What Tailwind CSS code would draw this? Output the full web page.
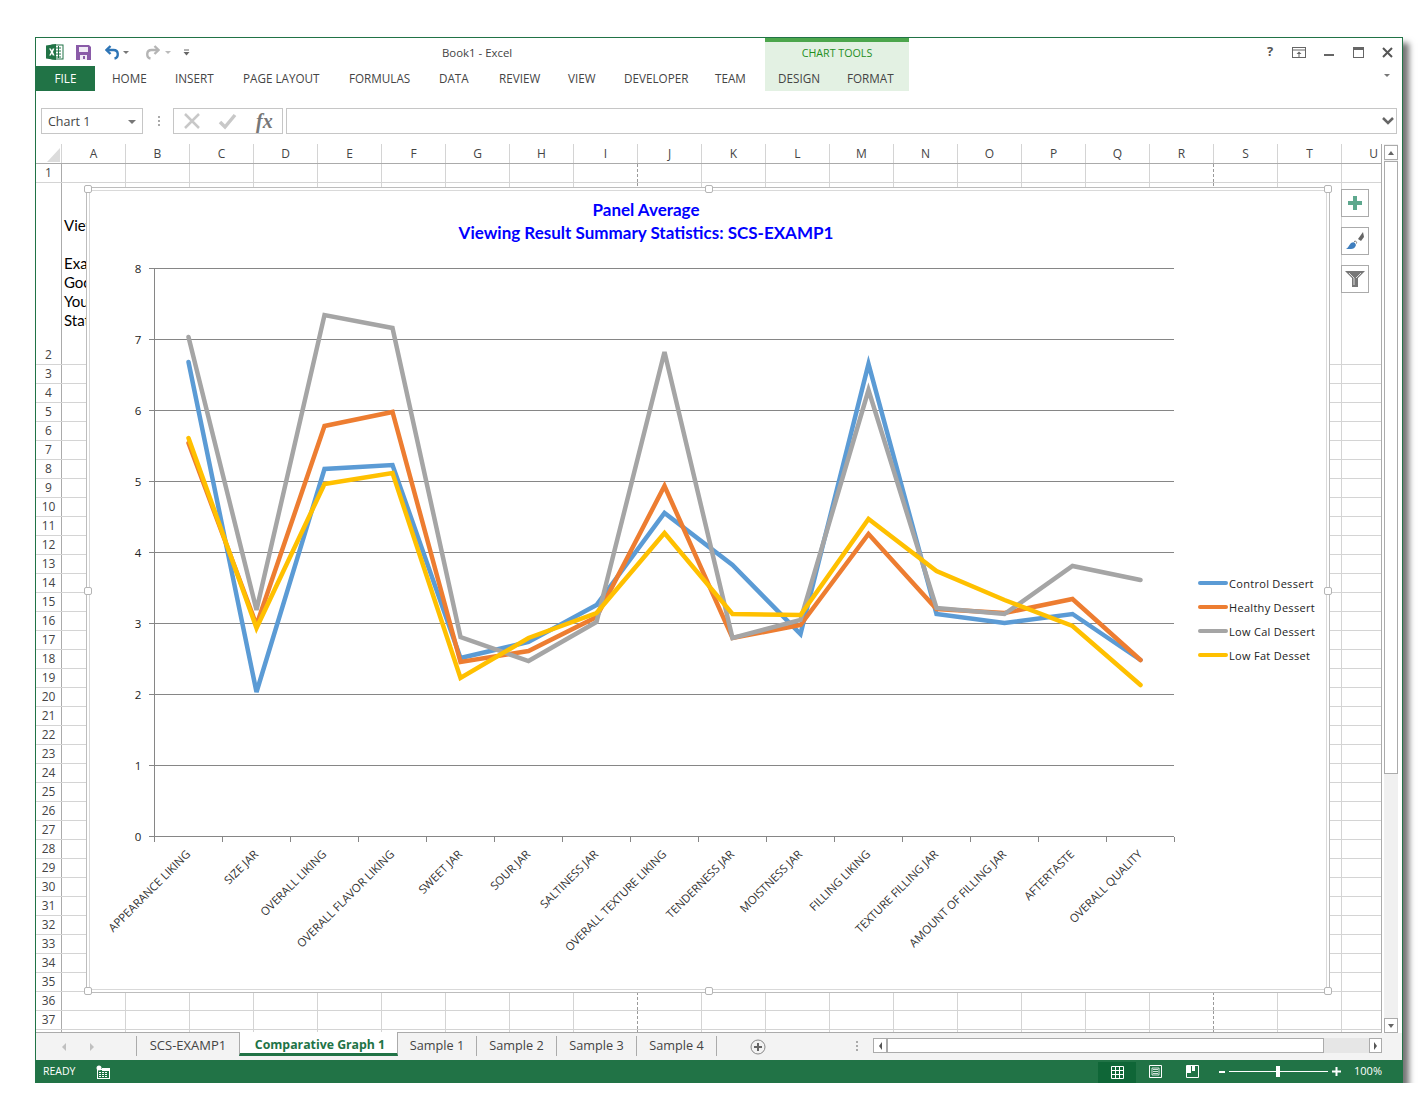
<!DOCTYPE html>
<html lang="en">
<head>
    <meta charset="UTF-8">
    <title>Book1 - Excel</title>
    <script src="https://cdn.jsdelivr.net/npm/@tailwindcss/browser@4"></script>
</head>
<body class="bg-white font-['Open_Sans',sans-serif] text-[#444] text-[12px] overflow-hidden">

<!-- Excel window -->
<div class="ml-[35px] mt-[37px] w-[1368px] h-[1046px] border border-[#217346] border-b-0 bg-white flex flex-col shadow-[6px_6px_6px_rgba(0,0,0,0.55)]">

    <!-- Title bar -->
    <div class="h-[28px] flex items-center relative shrink-0">
        <div class="flex items-center pl-[10px] w-[400px]">
            <svg width="18" height="18" viewBox="0 0 18 18" class="mr-[12px]">
                <rect x="6" y="2" width="11" height="14" fill="#fff" stroke="#217346"/>
                <path d="M10 5h5M10 8h5M10 11h5M10 14h5M12.500 3v12" stroke="#217346"/>
                <path d="M0 2.500 10 1v16L0 15.500z" fill="#217346"/>
                <path d="M3 5.500h1.800l1 2 1-2h1.600L7 9l1.600 3.500H6.800l-1-2.100-1 2.100H3.200L5 9z" fill="#fff"/>
            </svg>
            <svg width="15" height="15" viewBox="0 0 15 15" class="mr-[14px]">
                <path d="M0 0h13l2 2v13H0z" fill="#8a5ba8"/>
                <rect x="3" y="2" width="9" height="5" fill="#f1ebf6"/>
                <rect x="4" y="10" width="7" height="5" fill="#f1ebf6"/>
                <rect x="7" y="11" width="2" height="3" fill="#8a5ba8"/>
            </svg>
            <svg width="15" height="15" viewBox="0 0 15 15">
                <path d="M5.500 1 1.500 5l4 4" fill="none" stroke="#2e75b6" stroke-width="2.400"/>
                <path d="M2 5h6.500c5.500 0 5.500 7.500 1 8.500" fill="none" stroke="#2e75b6" stroke-width="2.400"/>
            </svg>
            <span class="ml-[3px] w-0 h-0 border-x-[3px] border-x-transparent border-t-[3px] border-t-[#777]"></span>
            <svg width="15" height="15" viewBox="0 0 15 15" class="ml-[16px]">
                <path d="M9.500 1l4 4-4 4" fill="none" stroke="#b5b5b5" stroke-width="2.400"/>
                <path d="M13 5H6.500c-5.500 0-5.500 7.500-1 8.500" fill="none" stroke="#b5b5b5" stroke-width="2.400"/>
            </svg>
            <span class="ml-[5px] w-0 h-0 border-x-[3px] border-x-transparent border-t-[3px] border-t-[#bbb]"></span>
            <svg width="7" height="7" viewBox="0 0 7 7" class="ml-[12px]">
                <path d="M1 1h5" stroke="#666"/><path d="M0.500 3h6L3.500 6.500z" fill="#666"/>
            </svg>
        </div>
        <div class="w-[329px] pt-[2px] pl-[6px] text-[#444] text-[11.400px]">Book1 - Excel</div>
        <!-- Chart tools contextual header -->
        <div class="w-[144px] h-[28px] bg-[#e3f1e3] border-t-[4px] border-[#4ca64c] flex items-center justify-center pb-[2px] text-[#1f8f1f] text-[10.700px] shrink-0">CHART TOOLS</div>
        <div class="flex-1 flex items-center justify-end pr-[9px] gap-[18px] text-[#555]">
            <span class="font-bold text-[13px] w-[10px] text-center translate-x-[2px]">?</span>
            <svg width="14" height="11" viewBox="0 0 14 11" class="ml-[1px]"><rect x="0.500" y="0.500" width="13" height="10" fill="none" stroke="#666"/><path d="M0 3h14" stroke="#666"/><path d="M7 4.500 4.500 7h2v3h1V7h2z" fill="#666"/></svg>
            <svg width="11" height="11" viewBox="0 0 11 11"><rect y="7" width="10" height="2" fill="#666"/></svg>
            <svg width="11" height="11" viewBox="0 0 11 11"><rect x="0.500" y="0.500" width="10" height="10" fill="none" stroke="#666"/><rect width="11" height="3" fill="#666"/></svg>
            <svg width="11" height="11" viewBox="0 0 11 11"><path d="M1 1l9 9M10 1l-9 9" stroke="#555" stroke-width="2"/></svg>
        </div>
    </div>

    <!-- Ribbon tabs -->
    <div class="h-[25px] flex items-center shrink-0 text-[#444] text-[11.700px] relative">
        <div class="w-[59px] h-full bg-[#217346] text-white flex items-center justify-center">FILE</div>
        <div class="w-[17px]"></div>
        <div class="w-[63px]">HOME</div>
        <div class="w-[68px]">INSERT</div>
        <div class="w-[106px]">PAGE LAYOUT</div>
        <div class="w-[90px]">FORMULAS</div>
        <div class="w-[60px]">DATA</div>
        <div class="w-[69px]">REVIEW</div>
        <div class="w-[56px]">VIEW</div>
        <div class="w-[91px]">DEVELOPER</div>
        <div class="w-[50px]">TEAM</div>
        <div class="w-[144px] h-full bg-[#e3f1e3] flex items-center">
            <span class="ml-[13px] w-[69px]">DESIGN</span>
            <span>FORMAT</span>
        </div>
        <span class="absolute right-[12px] top-[8px] w-0 h-0 border-x-[3px] border-x-transparent border-t-[3px] border-t-[#777]"></span>
    </div>

    <!-- Formula bar -->
    <div class="h-[26px] mt-[17px] flex items-stretch shrink-0 pl-[5px] pr-[5px]">
        <div class="w-[102px] border border-[#c6c6c6] flex items-center justify-between pl-[6px] pr-[6px] pt-[2px] text-[#444] text-[12.500px]">
            <span>Chart 1</span>
            <span class="w-0 h-0 border-x-[4px] border-x-transparent border-t-[4px] border-t-[#777]"></span>
        </div>
        <div class="w-[30px] flex items-center justify-center">
            <svg width="3" height="11" viewBox="0 0 3 11"><path d="M1 0h2v2H1zM1 4h2v2H1zM1 8h2v2H1z" fill="#aaa"/></svg>
        </div>
        <div class="w-[110px] border border-[#c6c6c6] flex items-center pl-[9px]">
            <svg width="18" height="18" viewBox="0 0 18 18"><path d="M2 2l14 14M16 2 2 16" stroke="#c8c8c8" stroke-width="2.500"/></svg>
            <svg width="20" height="18" viewBox="0 0 20 18" class="ml-[17px]"><path d="M2 10l5 5 10-12" fill="none" stroke="#c8c8c8" stroke-width="3.500"/></svg>
            <span class="ml-[18px] font-['Liberation_Serif',serif] italic font-bold text-[20px] text-[#777] leading-none">fx</span>
        </div>
        <div class="flex-1 ml-[3px] border border-[#c6c6c6] flex items-center justify-end pr-[2px]">
            <svg width="12" height="8" viewBox="0 0 12 8"><path d="M1 1l5 5 5-5" fill="none" stroke="#666" stroke-width="2.500"/></svg>
        </div>
    </div>

    <!-- Sheet area + vertical scrollbar -->
    <div class="mt-[10px] flex-1 min-h-0 flex">
        <div class="w-[1346px] relative overflow-hidden border-b border-r border-[#ababab]">
            <!-- Column headers -->
            <div class="h-[20px] flex border-b border-[#ababab]">
                <div class="w-[26px] shrink-0 relative border-r border-[#d4d4d4]">
                    <svg width="13" height="14" viewBox="0 0 13 14" class="absolute left-[11px] top-[4px]"><path d="M13 0v14H0z" fill="#dcdcdc"/></svg>
                </div>
                <div id="cols" class="flex"></div>
            </div>
            <!-- Rows -->
            <div id="rows"></div>

            <!-- Chart, lies over the cells -->
            <div class="absolute left-[50px] top-[43px] w-[1244px] h-[806px] bg-white border border-[#bdbdbd] p-[2px]">
                <div class="w-full h-full border border-[#d9d9d9]">
                <svg width="1236" height="798" viewBox="90 191 1236 798" class="block font-['Open_Sans',sans-serif]">
                    <g stroke="#868686" stroke-width="1">
                        <path d="M149 268.500H1174M149 339.500H1174M149 410.500H1174M149 481.500H1174M149 552.500H1174M149 623.500H1174M149 694.500H1174M149 765.500H1174M149 836.500H1174"/>
                        <path d="M154.500 268V842M222.500 837v5M290.500 837v5M358.500 837v5M426.500 837v5M494.500 837v5M562.500 837v5M630.500 837v5M698.500 837v5M766.500 837v5M834.500 837v5M902.500 837v5M970.500 837v5M1038.500 837v5M1106.500 837v5M1174.500 837v5"/>
                    </g>
                    <g fill="none" stroke-width="4.500" stroke-linecap="round" stroke-linejoin="miter">
                        <polyline stroke="#5b9bd5" points="188.500,362 256.500,692 324.500,469 392.500,465 460.500,658 528.500,642 596.500,605 664.500,513 732.500,565 800.500,634 868.500,364 936.500,614 1004.500,623 1072.500,614 1140.500,660"/>
                        <polyline stroke="#ed7d31" points="188.500,443 256.500,625 324.500,426 392.500,412 460.500,662 528.500,651 596.500,617 664.500,486 732.500,638 800.500,625 868.500,534 936.500,609 1004.500,613 1072.500,599 1140.500,660"/>
                        <polyline stroke="#a5a5a5" points="188.500,337 256.500,610 324.500,315 392.500,328 460.500,637 528.500,661 596.500,622 664.500,352 732.500,638 800.500,620 868.500,390 936.500,608 1004.500,614 1072.500,566 1140.500,580"/>
                        <polyline stroke="#ffc000" points="188.500,438 256.500,628 324.500,484 392.500,473 460.500,678 528.500,638 596.500,613 664.500,533 732.500,614 800.500,615 868.500,519 936.500,571 1004.500,600 1072.500,626 1140.500,685"/>
                    </g>
                    <g fill="#0000ff" font-weight="700" font-size="17" text-anchor="middle" class="font-['Lato',sans-serif]">
                        <text x="646" y="216">Panel Average</text>
                        <text x="646" y="239">Viewing Result Summary Statistics: SCS-EXAMP1</text>
                    </g>
                    <g fill="#222" font-size="11.500" text-anchor="middle">
                        <text x="138" y="273">8</text><text x="138" y="344">7</text><text x="138" y="415">6</text><text x="138" y="486">5</text><text x="138" y="557">4</text><text x="138" y="628">3</text><text x="138" y="699">2</text><text x="138" y="770">1</text><text x="138" y="841">0</text>
                    </g>
                    <g fill="#333" font-size="11.400" text-anchor="end">
                        <text transform="translate(191 855) rotate(-45)">APPEARANCE LIKING</text>
                        <text transform="translate(259 855) rotate(-45)">SIZE JAR</text>
                        <text transform="translate(327 855) rotate(-45)">OVERALL LIKING</text>
                        <text transform="translate(395 855) rotate(-45)">OVERALL FLAVOR LIKING</text>
                        <text transform="translate(463 855) rotate(-45)">SWEET JAR</text>
                        <text transform="translate(531 855) rotate(-45)">SOUR JAR</text>
                        <text transform="translate(599 855) rotate(-45)">SALTINESS JAR</text>
                        <text transform="translate(667 855) rotate(-45)">OVERALL TEXTURE LIKING</text>
                        <text transform="translate(735 855) rotate(-45)">TENDERNESS JAR</text>
                        <text transform="translate(803 855) rotate(-45)">MOISTNESS JAR</text>
                        <text transform="translate(871 855) rotate(-45)">FILLING LIKING</text>
                        <text transform="translate(939 855) rotate(-45)">TEXTURE FILLING JAR</text>
                        <text transform="translate(1007 855) rotate(-45)">AMOUNT OF FILLING JAR</text>
                        <text transform="translate(1075 855) rotate(-45)">AFTERTASTE</text>
                        <text transform="translate(1143 855) rotate(-45)">OVERALL QUALITY</text>
                    </g>
                    <g stroke-width="4" stroke-linecap="round">
                        <path d="M1200 583h26" stroke="#5b9bd5"/><path d="M1200 607h26" stroke="#ed7d31"/><path d="M1200 631h26" stroke="#a5a5a5"/><path d="M1200 655h26" stroke="#ffc000"/>
                    </g>
                    <g fill="#222" font-size="11" letter-spacing="0.300">
                        <text x="1229" y="588">Control Dessert</text>
                        <text x="1229" y="612">Healthy Dessert</text>
                        <text x="1229" y="636">Low Cal Dessert</text>
                        <text x="1229" y="660">Low Fat Desset</text>
                    </g>
                </svg>
                </div>
                <!-- Selection handles -->
                <span class="absolute -left-[3px] -top-[3px] w-[8px] h-[8px] rounded-[2px] bg-white border border-[#b5b5b5]"></span>
                <span class="absolute -right-[3px] -top-[3px] w-[8px] h-[8px] rounded-[2px] bg-white border border-[#b5b5b5]"></span>
                <span class="absolute -left-[3px] -bottom-[3px] w-[8px] h-[8px] rounded-[2px] bg-white border border-[#b5b5b5]"></span>
                <span class="absolute -right-[3px] -bottom-[3px] w-[8px] h-[8px] rounded-[2px] bg-white border border-[#b5b5b5]"></span>
                <span class="absolute left-[618px] -top-[3px] w-[8px] h-[8px] rounded-[2px] bg-white border border-[#b5b5b5]"></span>
                <span class="absolute left-[618px] -bottom-[3px] w-[8px] h-[8px] rounded-[2px] bg-white border border-[#b5b5b5]"></span>
                <span class="absolute -left-[3px] top-[399px] w-[8px] h-[8px] rounded-[2px] bg-white border border-[#b5b5b5]"></span>
                <span class="absolute -right-[3px] top-[399px] w-[8px] h-[8px] rounded-[2px] bg-white border border-[#b5b5b5]"></span>
            </div>

            <!-- Chart side buttons -->
            <div class="absolute left-[1305px] top-[45px] flex flex-col gap-[10px]">
                <div class="w-[28px] h-[28px] bg-white border border-[#ababab] flex items-center justify-center">
                    <svg width="14" height="14" viewBox="0 0 14 14"><path d="M5 0h4v5h5v4H9v5H5V9H0V5h5z" fill="#5ea88e"/></svg>
                </div>
                <div class="w-[28px] h-[28px] bg-white border border-[#ababab] flex items-center justify-center">
                    <svg width="18" height="18" viewBox="0 0 18 18"><path d="M12 7 17 0l1 5-3 4z" fill="#666"/><path d="M0 17c2-1 3-4 5-6 2-1 3-1 4 0l1 2c-1 3-3 4-5 4z" fill="#3f7fbf"/><path d="M8 9.500c2-1 3 .5 2.500 2" fill="none" stroke="#777"/></svg>
                </div>
                <div class="w-[28px] h-[28px] bg-white border border-[#ababab] flex items-center justify-center">
                    <svg width="20" height="18" viewBox="0 0 20 18"><path d="M0 1h20l-7 7v9H7V8z" fill="#777"/><path d="M4 3l5 5v7M16 3l-5 5" fill="none" stroke="#ddd"/></svg>
                </div>
            </div>
        </div>

        <!-- Vertical scrollbar -->
        <div class="ml-[2px] w-[14px] flex flex-col shrink-0 bg-[#f0f0f0]">
            <div class="h-[15px] mt-[1px] bg-white border border-[#ababab] flex items-center justify-center"><span class="w-0 h-0 border-x-[3px] border-x-transparent border-b-[4px] border-b-[#666]"></span></div>
            <div class="h-[613px] mt-[1px] bg-white border border-[#ababab]"></div>
            <div class="flex-1"></div>
            <div class="h-[15px] bg-white border border-[#ababab] flex items-center justify-center"><span class="w-0 h-0 border-x-[3px] border-x-transparent border-t-[4px] border-t-[#666]"></span></div>
        </div>
        <div class="w-[4px]"></div>
    </div>

    <!-- Sheet tabs -->
    <div class="h-[27px] bg-[#f3f3f3] flex items-stretch shrink-0 text-[#444] text-[12.700px] relative">
        <div class="w-[100px] flex items-center pl-[26px] gap-[24px]">
            <span class="w-0 h-0 border-y-[4px] border-y-transparent border-r-[4px] border-r-[#c0c0c0]"></span>
            <span class="w-0 h-0 border-y-[4px] border-y-transparent border-l-[4px] border-l-[#c0c0c0]"></span>
        </div>
        <div class="w-[103px] flex items-center justify-center border-l border-[#ababab] h-[20px] mt-[3px] text-[13px]">SCS-EXAMP1</div>
        <div class="w-[159px] h-[24px] -mt-[1px] pt-[5px] pl-[3px] bg-white border-x border-[#ababab] border-b-[3px] border-b-[#217346] flex items-center justify-center font-bold text-[12.300px] text-[#217346]">Comparative Graph 1</div>
        <div class="w-[79px] h-[20px] mt-[3px] flex items-center justify-center border-r border-[#ababab]">Sample 1</div>
        <div class="w-[80px] h-[20px] mt-[3px] flex items-center justify-center border-r border-[#ababab]">Sample 2</div>
        <div class="w-[80px] h-[20px] mt-[3px] flex items-center justify-center border-r border-[#ababab]">Sample 3</div>
        <div class="w-[80px] h-[20px] mt-[3px] flex items-center justify-center border-r border-[#ababab]">Sample 4</div>
        <div class="ml-[33px] w-[16px] flex items-center">
            <svg width="16" height="16" viewBox="0 0 16 16"><circle cx="8" cy="8" r="7" fill="none" stroke="#888"/><path d="M7 4h2v3h3v2H9v3H7V9H4V7h3z" fill="#666"/></svg>
        </div>
        <div class="ml-[90px] w-[17px] flex items-center">
            <svg width="3" height="11" viewBox="0 0 3 11"><path d="M0 0h2v2H0zM0 4h2v2H0zM0 8h2v2H0z" fill="#aaa"/></svg>
        </div>
        <!-- Horizontal scrollbar -->
        <div class="w-[509px] h-[15px] mt-[5px] flex bg-[#e6e6e6]">
            <div class="w-[14px] bg-white border border-[#ababab] flex items-center justify-center"><span class="w-0 h-0 border-y-[4px] border-y-transparent border-r-[3px] border-r-[#555]"></span></div>
            <div class="w-[437px] bg-white border border-[#ababab]"></div>
            <div class="flex-1"></div>
            <div class="w-[13px] bg-white border border-[#ababab] flex items-center justify-center"><span class="w-0 h-0 border-y-[4px] border-y-transparent border-l-[3px] border-l-[#555]"></span></div>
        </div>
    </div>

    <!-- Status bar -->
    <div class="h-[23px] bg-[#217346] flex items-center shrink-0 text-white text-[10.500px] relative">
        <span class="ml-[7px] w-[53px]">READY</span>
        <svg width="14" height="14" viewBox="0 0 14 14"><circle cx="3" cy="3" r="2.500" fill="#fff"/><rect x="1.500" y="4.500" width="12" height="9" fill="none" stroke="#fff"/><path d="M6 3h8v3H6zM3 7h2v1H3zM6 7h2v1H6zM9 7h2v1H9zM3 9h2v1H3zM6 9h2v1H6zM9 9h2v1H9zM3 11h2v1H3zM6 11h2v1H6zM9 11h2v1H9z" fill="#fff"/></svg>
        <div class="ml-auto flex items-center h-full">
            <div class="w-[38px] h-[21px] mt-[1px] bg-[#0f6637] flex items-center justify-center">
                <svg width="13" height="13" viewBox="0 0 13 13"><path d="M.5.5h12v12H.5zM4.500.5v12M8.500.5v12M.5 4.500h12M.5 8.500h12" fill="none" stroke="#fff"/></svg>
            </div>
            <div class="w-[38px] flex items-center justify-center">
                <svg width="13" height="13" viewBox="0 0 13 13"><path d="M.5.5h12v12H.5z" fill="none" stroke="#fff"/><path d="M3 3h7v7H3zM4 4.500h5M4 6.500h5M4 8.500h5" fill="none" stroke="#fff" stroke-width=".8"/></svg>
            </div>
            <div class="w-[36px] flex items-center justify-center">
                <svg width="13" height="13" viewBox="0 0 13 13"><path d="M.5.5h12v12H.5z" fill="none" stroke="#fff"/><rect x="1" y="1" width="4" height="7" fill="#fff"/><rect x="6" y="1" width="3" height="5" fill="#fff"/></svg>
            </div>
            <span class="ml-[9px] w-[6px] h-[2px] bg-white"></span>
            <div class="ml-[4px] w-[99px] h-[1px] bg-white relative"><span class="absolute left-[47px] -top-[5px] w-[4px] h-[11px] bg-white"></span></div>
            <svg width="9" height="9" viewBox="0 0 9 9" class="ml-[4px]"><path d="M3.500 0h2v3.500H9v2H5.500V9h-2V5.500H0v-2h3.500z" fill="#fff"/></svg>
            <span class="ml-[13px] mr-[20px] text-[11px]">100%</span>
        </div>
    </div>
</div>

<script>
    // column headers and sheet rows
    const letters = 'ABCDEFGHIJKLMNOPQRSTU'.split('');
    const cols = document.getElementById('cols');
    letters.forEach((l) => {
        const c = document.createElement('div');
        c.className = 'w-[64px] h-[19px] shrink-0 border-r border-[#d4d4d4] flex items-center justify-center text-[#444]';
        c.textContent = l;
        cols.appendChild(c);
    });

    const rows = document.getElementById('rows');
    for (let r = 1; r <= 38; r++) {
        const row = document.createElement('div');
        row.className = r === 2
            ? 'flex h-[182px] border-b border-[#d4d4d4]'
            : 'flex h-[19px] border-b border-[#d4d4d4]';
        const head = document.createElement('div');
        head.className = 'w-[26px] shrink-0 border-r border-[#ababab] flex items-end justify-center text-[#444] leading-[18px]';
        head.textContent = r === 38 ? '' : r;
        row.appendChild(head);
        letters.forEach((l, i) => {
            const cell = document.createElement('div');
            cell.className = i === 8 || i === 17
                ? 'w-[64px] shrink-0 border-r border-dashed border-[#9a9a9a]'
                : 'w-[64px] shrink-0 border-r border-[#d4d4d4]';
            if (r === 2 && i === 0) {
                cell.className = 'w-[64px] shrink-0 border-r border-[#d4d4d4] pl-[2px] pt-[33px] whitespace-pre leading-[19px] text-[15px] text-black font-[Lato,sans-serif]';
                cell.textContent = 'View\n\nExam\nGood\nYour\nStat';
            }
            row.appendChild(cell);
        });
        rows.appendChild(row);
    }
</script>
</body>
</html>
